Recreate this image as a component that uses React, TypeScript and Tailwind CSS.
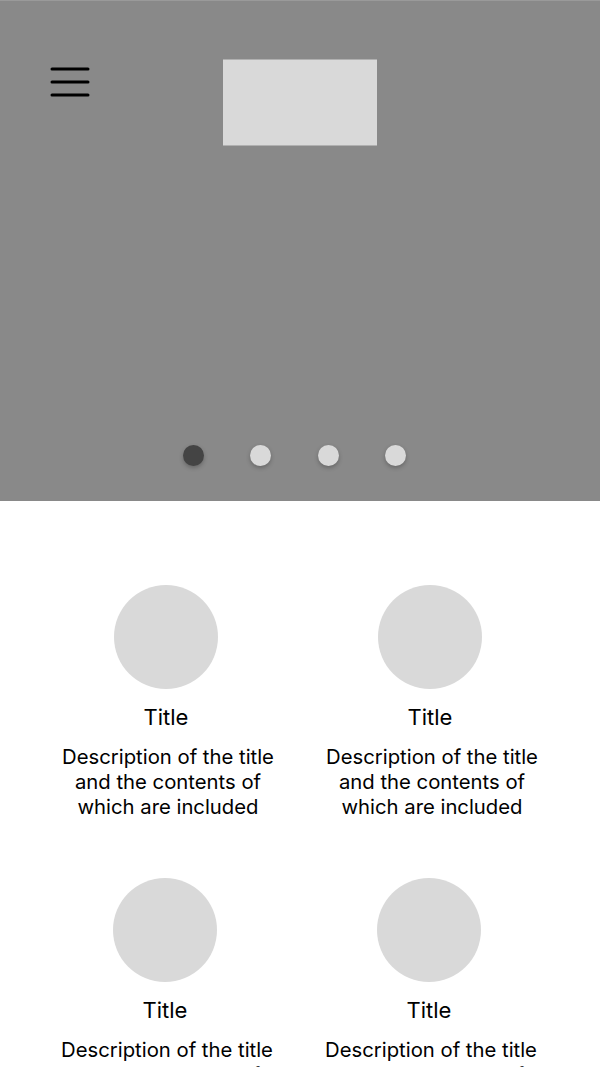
const items = [1, 2, 3, 4];

const Dot = ({ active }: { active?: boolean }) => (
  <div
    className={
      "w-[21px] h-[21px] rounded-full shadow-[0_2px_4px_rgba(0,0,0,0.25)] " +
      (active ? "bg-[#444444]" : "bg-[#d9d9d9]")
    }
  />
);

export default function App() {
  return (
    <div className="w-[600px] h-[1067px] overflow-hidden bg-white font-['Inter',sans-serif] text-black">
      {/* Hero / carousel */}
      <div className="h-[501px] bg-[#898989] border-t border-[#9a9a9a] flex flex-col">
        <div className="flex items-start pt-[58px]">
          <button className="ml-[50px] mt-[8px] w-[40px] h-[30px] flex items-center justify-center">
            <svg width="40" height="32" viewBox="0 0 40 32" fill="none">
              <path d="M2 3h36M2 16h36M2 29h36" stroke="#000" strokeWidth="3" strokeLinecap="round" />
            </svg>
          </button>
          <div className="ml-[133px] w-[154px] h-[87px] bg-[#d9d9d9] border-y border-[#b0b0b0]" />
        </div>
        <div className="mt-auto mb-[35px] flex justify-center gap-[46.5px] pr-[11px]">
          <Dot active />
          <Dot />
          <Dot />
          <Dot />
        </div>
      </div>

      {/* Features */}
      <div className="pt-[84px] pl-[34px] grid grid-cols-[264px_264px] gap-y-[59px]">
        {items.map((i) => (
          <div key={i} className={"flex flex-col items-center " + (i > 2 ? "-ml-[1px] mr-[1px]" : "")}>
            <div className="w-[104px] h-[104px] rounded-full bg-[#d9d9d9]" />
            <div className="mt-[14px] text-[22px] leading-[28px]">Title</div>
            <p className="mt-[13px] ml-[4px] text-[20.3px] leading-[25px] text-center whitespace-nowrap">
              Description of the title
              <br />
              and the contents of
              <br />
              which are included
            </p>
          </div>
        ))}
      </div>
    </div>
  );
}
